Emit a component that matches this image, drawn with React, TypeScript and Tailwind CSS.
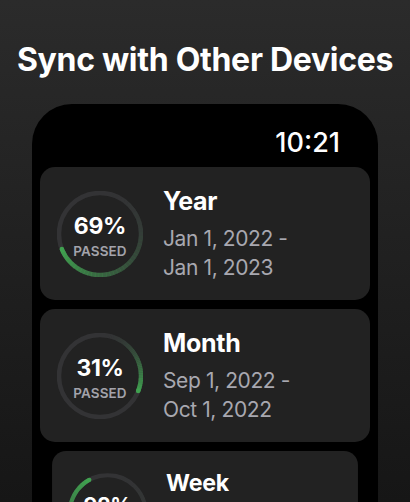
import React from "react";

type Period = {
    label: string;
    percent: number;
    from: string;
    to: string;
};

const periods: Period[] = [
    { label: "Year", percent: 69, from: "Jan 1, 2022 -", to: "Jan 1, 2023" },
    { label: "Month", percent: 31, from: "Sep 1, 2022 -", to: "Oct 1, 2022" },
    { label: "Week", percent: 92, from: "Sep 26, 2022 -", to: "Oct 3, 2022" },
];

const FONT = { fontFamily: "Inter, 'Noto Sans', sans-serif" };

//Ring drawing
const SIZE = 86;
const R = 41;
const C = SIZE / 2;

const point = (deg: number) => {
    const a = (deg * Math.PI) / 180;
    return [C + R * Math.sin(a), C - R * Math.cos(a)];
};

const Ring = ({ percent }: { percent: number }) => {
    const end = (percent / 100) * 360;
    const steps = 48;
    const segs = [];
    for (let i = 0; i < steps; i++) {
        const a0 = (end * i) / steps;
        const a1 = (end * (i + 1)) / steps + 0.6;
        const [x0, y0] = point(a0);
        const [x1, y1] = point(a1);
        const t = (i + 1) / steps;
        segs.push(
            <path
                key={i}
                d={`M ${x0} ${y0} A ${R} ${R} 0 0 1 ${x1} ${y1}`}
                stroke="#40a150"
                strokeOpacity={Math.pow(t, 2.4)}
                strokeWidth={4.5}
                fill="none"
            />
        );
    }
    const [ex, ey] = point(end);
    return (
        <svg width={SIZE} height={SIZE} viewBox={`0 0 ${SIZE} ${SIZE}`} className="col-start-1 row-start-1">
            <circle cx={C} cy={C} r={R} stroke="#333335" strokeWidth={4.5} fill="none" />
            {segs}
            <circle cx={ex} cy={ey} r={2.25} fill="#40a150" />
        </svg>
    );
};

const PeriodCard = ({ item, className = "" }: { item: Period; className?: string }) => {
    return (
        <div className={`h-[133px] shrink-0 rounded-[15px] bg-[#222222] flex items-center pl-[17px] ${className}`}>
            <div className="grid place-items-center">
                <Ring percent={item.percent} />
                <div className="col-start-1 row-start-1 flex flex-col items-center pt-[5px]">
                    <span className="text-[23px] leading-[22px] font-bold text-white tracking-[-0.3px]">{item.percent}%</span>
                    <span className="text-[13.5px] leading-[13px] font-semibold text-[#a3a3ab] mt-[8px] tracking-[0.1px]">PASSED</span>
                </div>
            </div>
            <div className="ml-[20px] flex flex-col">
                <h4 className="text-[25px] leading-[30px] font-bold text-white tracking-[-0.3px]">{item.label}</h4>
                <p className="mt-[8px] text-[21px] leading-[29px] text-[#a8a8b0] tracking-[-0.4px]">{item.from}</p>
                <p className="text-[21px] leading-[29px] text-[#a8a8b0] tracking-[-0.4px]">{item.to}</p>
            </div>
        </div>
    );
};

const App = () => {
    return (
        <div className="w-[410px] h-[502px] overflow-hidden bg-linear-to-b from-[#2b2b2b] to-[#161616] flex flex-col items-center" style={FONT}>
            <h1 className="mt-[44px] text-[32px] leading-[32px] font-bold text-white tracking-[-0.3px] whitespace-nowrap">
                Sync with Other Devices
            </h1>
            <div className="mt-[28px] w-[346px] flex-1 self-start ml-[32px] bg-black rounded-t-[40px] flex flex-col px-[8px]">
                <div className="pt-[26px] pr-[30px] text-right text-[27px] leading-[26px] font-medium text-white">10:21</div>
                <div className="mt-[11px] flex flex-col gap-[9px]">
                    <PeriodCard item={periods[0]} />
                    <PeriodCard item={periods[1]} />
                    <PeriodCard item={periods[2]} className="scale-[0.927] origin-top" />
                </div>
            </div>
        </div>
    );
};

export default App;
